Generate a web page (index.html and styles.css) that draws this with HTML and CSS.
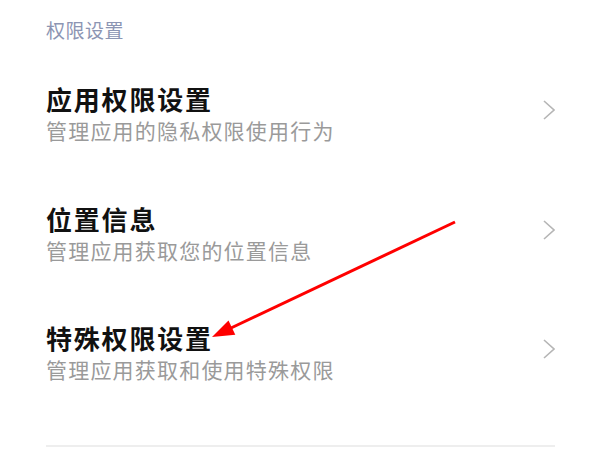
FILE: index.html
```html
<!DOCTYPE html>
<html lang="zh-CN">
<head>
  <meta charset="UTF-8" />
  <meta name="viewport" content="width=device-width, initial-scale=1.0"/>
  <title>权限设置</title>
  <link rel="stylesheet" href="styles.css">
</head>
<body>
  <div class="page">
    <div class="section-title">权限设置</div>

    <div class="item">
      <div class="text">
        <div class="name">应用权限设置</div>
        <div class="desc">管理应用的隐私权限使用行为</div>
      </div>
      <svg class="chevron" width="12" height="20" viewBox="0 0 12 20"><polyline points="1,1 11,10 1,19" /></svg>
    </div>

    <div class="item">
      <div class="text">
        <div class="name">位置信息</div>
        <div class="desc">管理应用获取您的位置信息</div>
      </div>
      <svg class="chevron" width="12" height="20" viewBox="0 0 12 20"><polyline points="1,1 11,10 1,19" /></svg>
    </div>

    <div class="item">
      <div class="text">
        <div class="name">特殊权限设置</div>
        <div class="desc">管理应用获取和使用特殊权限</div>
      </div>
      <svg class="chevron" width="12" height="20" viewBox="0 0 12 20"><polyline points="1,1 11,10 1,19" /></svg>
    </div>

    <div class="divider"></div>
  </div>

  <!-- annotation arrow drawn over the list -->
  <svg class="arrow" width="600" height="450" viewBox="0 0 600 450">
    <line x1="455" y1="222" x2="231" y2="328" />
    <polygon points="212,337 235.3,334.8 228.5,320.4" />
  </svg>
</body>
</html>
```

FILE: styles.css
```css
body {
  margin: 0;
  background: #fff;
  font-family: "Noto Sans CJK SC", "Noto Sans", sans-serif;
  overflow: hidden;
}
.page {
  padding: 20px 45px 0 46px;
}
.section-title {
  font-size: 19px;
  line-height: 19px;
  letter-spacing: 0.5px;
  color: #8c95b3;
  margin-bottom: 15px;
}
.item {
  height: 119.5px;
  display: flex;
  align-items: center;
  justify-content: space-between;
}
.name {
  font-size: 26px;
  line-height: 30px;
  letter-spacing: 1.8px;
  font-weight: 600;
  color: #111;
}
.desc {
  margin-top: 3px;
  font-size: 21px;
  line-height: 26px;
  letter-spacing: 1.2px;
  color: #9a9a9a;
}
.chevron {
  margin-bottom: 7px;
}
.chevron polyline {
  fill: none;
  stroke: #b5b5b5;
  stroke-width: 1.6;
}
.divider {
  margin-top: 32px;
  height: 2px;
  background: #eeeeee;
}
.arrow {
  position: absolute;
  left: 0;
  top: 0;
}
.arrow line {
  stroke: #ff0000;
  stroke-width: 3;
}
.arrow polygon {
  fill: #ff0000;
}
```
